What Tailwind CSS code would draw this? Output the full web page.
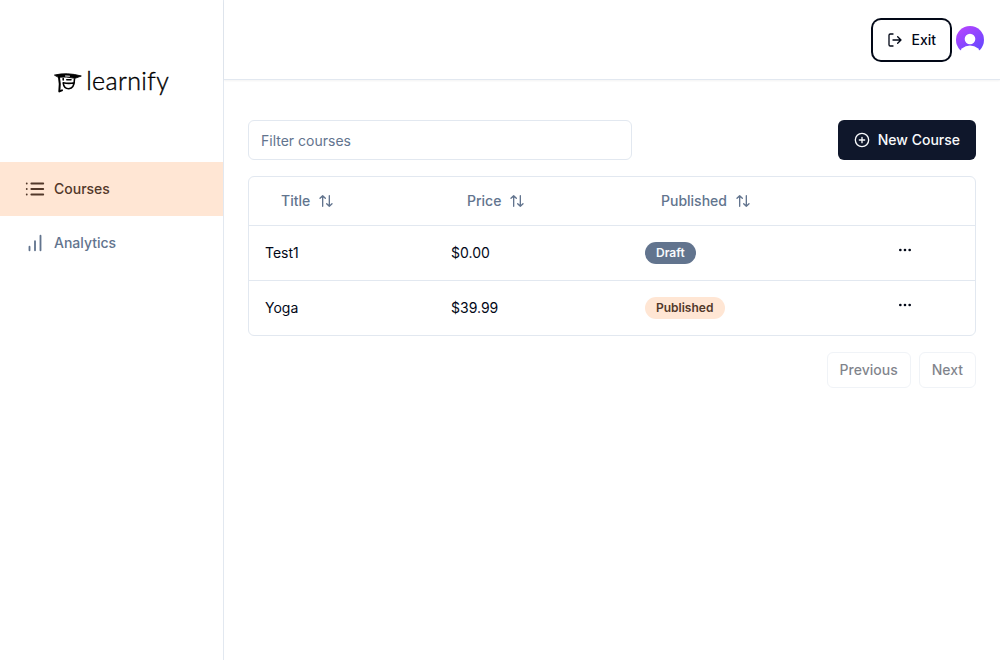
<!DOCTYPE html>
<html lang="en">
<head>
<meta charset="utf-8">
<title>Learnify</title>
<script src="https://cdn.jsdelivr.net/npm/@tailwindcss/browser@4"></script>
</head>
<body class="flex h-screen overflow-hidden bg-white font-['Inter',sans-serif] text-sm text-[#020817]">
<svg class="hidden">
  <symbol id="sort" viewBox="0 0 24 24"><path d="m3 8 4-4 4 4M7 4v16M21 16l-4 4-4-4M17 20V4"/></symbol>
  <symbol id="dots" viewBox="0 0 24 24"><circle cx="12" cy="12" r="1"/><circle cx="19" cy="12" r="1"/><circle cx="5" cy="12" r="1"/></symbol>
</svg>
<aside class="flex w-56 shrink-0 flex-col border-r border-slate-200">
  <div class="flex h-[162px] items-center pl-[54px]">
    <svg class="h-10 w-[120px]" viewBox="0 0 120 40" fill="none" stroke="#000" stroke-linecap="round" stroke-linejoin="round">
      <path d="M.8 14Q13 11 27.3 15L21 17.3Q12 15.2 4.5 16.2Z" fill="#000" stroke-width=".9"/>
      <path d="M11.5 15 15.5 15.2" stroke="#fff" stroke-width="1"/>
      <path d="M5 16.5Q6.5 23 5.3 30.4L8 29.4" stroke-width="2"/>
      <path d="M9.2 17.5V19M9.2 21.8Q15 23 20.3 21.8M9.2 22Q9.8 27.7 14.8 27.7 20.3 27.5 20.5 18M12.8 18.8H17" stroke-width="1.6"/>
      <text x="32.2" y="29" textLength="82.5" lengthAdjust="spacing" fill="#000" stroke="#000" stroke-width=".4" font-family="Lato, sans-serif" font-weight="300" font-size="25">learnify</text>
    </svg>
  </div>
  <nav class="font-medium">
    <a class="flex h-[54px] items-center gap-2 bg-[#ffe6d4] pl-6 text-[#52382a]">
      <svg class="size-[22px]" viewBox="0 0 24 24" fill="none" stroke="currentColor" stroke-width="2" stroke-linecap="round"><path d="M8 6h13M8 12h13M8 18h13M3 6h.01M3 12h.01M3 18h.01"/></svg>
      <span>Courses</span>
    </a>
    <a class="flex h-[54px] items-center gap-2 pl-6 text-slate-500">
      <svg class="size-[22px]" viewBox="0 0 24 24" fill="none" stroke="currentColor" stroke-width="2" stroke-linecap="round"><path d="M12 20V10M18 20V4M6 20v-4"/></svg>
      <span>Analytics</span>
    </a>
  </nav>
</aside>
<div class="flex min-w-0 flex-1 flex-col">
  <header class="flex h-20 items-center justify-end gap-1.5 border-b border-slate-200 pr-4 shadow-[0_1px_2px_0_rgb(0_0_0/0.05)]">
    <button class="flex h-10 items-center rounded-lg px-[14px] font-medium ring-2 ring-[#020817]">
      <svg class="mr-2 size-4" viewBox="0 0 24 24" fill="none" stroke="currentColor" stroke-width="2" stroke-linecap="round" stroke-linejoin="round"><path d="M9 21H5a2 2 0 0 1-2-2V5a2 2 0 0 1 2-2h4M16 17l5-5-5-5M21 12H9"/></svg>
      Exit
    </button>
    <svg class="size-7" viewBox="0 0 28 28">
      <defs><linearGradient id="av" x1=".2" y1=".1" x2=".8" y2=".9"><stop stop-color="#b044ff"/><stop offset="1" stop-color="#6c47ff"/></linearGradient><clipPath id="round"><circle cx="14" cy="14" r="14"/></clipPath></defs>
      <g clip-path="url(#round)"><rect width="28" height="24.6" fill="url(#av)"/><circle cx="14" cy="13" r="5.3" fill="#fff"/><ellipse cx="14" cy="29" rx="11" ry="9.5" fill="#fff"/></g>
    </svg>
  </header>
  <main class="px-6 pt-10">
    <div class="flex items-center justify-between">
      <input class="h-10 w-96 rounded-md border border-slate-200 px-3 placeholder:text-slate-500" placeholder="Filter courses">
      <button class="flex h-10 items-center rounded-md bg-slate-900 px-4 font-medium text-slate-50">
        <svg class="mr-2 size-4" viewBox="0 0 24 24" fill="none" stroke="currentColor" stroke-width="2" stroke-linecap="round"><circle cx="12" cy="12" r="10"/><path d="M8 12h8M12 8v8"/></svg>
        New Course
      </button>
    </div>
    <div class="mt-4 rounded-md border border-slate-200">
      <div class="grid h-[49px] grid-cols-[186px_194px_244px_1fr] items-center border-b border-slate-200 font-medium text-slate-500">
        <div class="flex items-center gap-2 pl-8">Title <svg class="size-4" fill="none" stroke="currentColor" stroke-width="2" stroke-linecap="round" stroke-linejoin="round"><use href="#sort"/></svg></div>
        <div class="flex items-center gap-2 pl-8">Price <svg class="size-4" fill="none" stroke="currentColor" stroke-width="2" stroke-linecap="round" stroke-linejoin="round"><use href="#sort"/></svg></div>
        <div class="flex items-center gap-2 pl-8">Published <svg class="size-4" fill="none" stroke="currentColor" stroke-width="2" stroke-linecap="round" stroke-linejoin="round"><use href="#sort"/></svg></div>
      </div>
      <div class="grid h-[55px] grid-cols-[186px_194px_244px_1fr] items-center border-b border-slate-200">
        <div class="pl-4">Test1</div>
        <div class="pl-4">$0.00</div>
        <div class="pl-4"><span class="flex h-[22px] w-fit items-center rounded-full bg-slate-500 px-[11px] text-xs font-semibold text-slate-50">Draft</span></div>
        <svg class="mb-[7px] ml-6 size-4" fill="none" stroke="currentColor" stroke-width="2" stroke-linecap="round"><use href="#dots"/></svg>
      </div>
      <div class="grid h-[54px] grid-cols-[186px_194px_244px_1fr] items-center">
        <div class="pl-4">Yoga</div>
        <div class="pl-4">$39.99</div>
        <div class="pl-4"><span class="flex h-[22px] w-20 items-center rounded-full bg-[#ffe6d4] px-[11px] text-xs font-semibold text-[#52382a]">Published</span></div>
        <svg class="mb-[7px] ml-6 size-4" fill="none" stroke="currentColor" stroke-width="2" stroke-linecap="round"><use href="#dots"/></svg>
      </div>
    </div>
    <div class="flex justify-end gap-2 pt-4 font-medium">
      <button class="h-9 rounded-md border border-slate-200 px-3 opacity-50">Previous</button>
      <button class="h-9 rounded-md border border-slate-200 px-3 opacity-50">Next</button>
    </div>
  </main>
</div>
</body>
</html>
